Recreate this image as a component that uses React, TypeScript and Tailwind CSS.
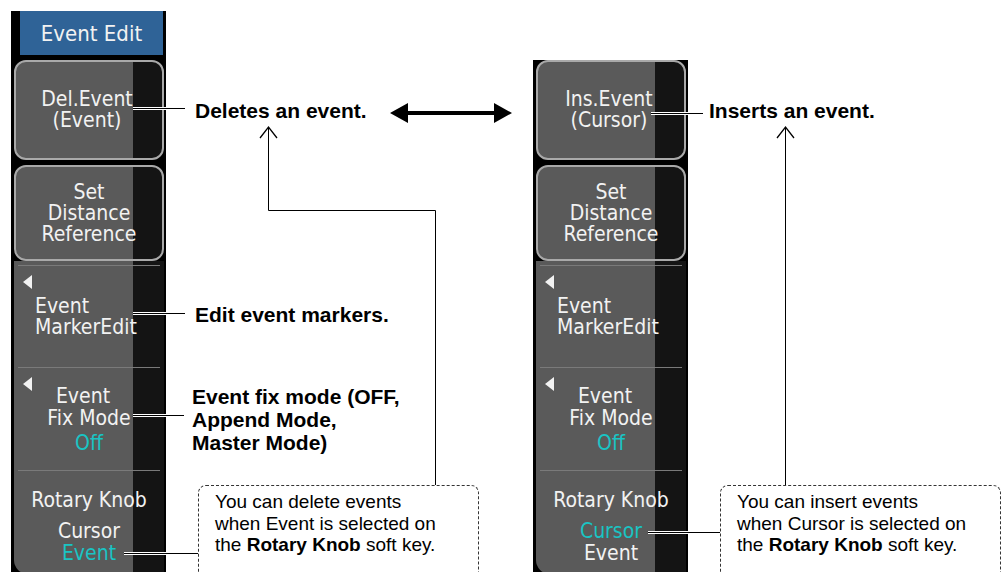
const sans = "font-['Liberation_Sans',Arial,sans-serif]";

function Arrow({ left }: { left: number }) {
  // small white pointer shown on keys that open a sub menu
  return (
    <div
      className="absolute top-[9px] h-0 w-0 border-y-[7px] border-r-[9px] border-y-transparent border-r-[#f2f2f2]"
      style={{ left }}
    />
  );
}

function SoftKeyPanel({ header, insert }: { header: boolean; insert: boolean }) {
  const cyan = "text-[#19c4c4]";
  return (
    <div
      className={`flex w-[155px] shrink-0 flex-col bg-black font-['DejaVu_Sans_Condensed','DejaVu_Sans',sans-serif] text-[#f2f2f2] ${
        header ? "ml-[11px] mt-[11px]" : "ml-[367px] mt-[60px]"
      }`}
    >
      {header && (
        <div className="mb-[5px] ml-[9px] flex h-[44px] w-[143px] items-center justify-center bg-[#2f6397] text-[22px]">
          Event Edit
        </div>
      )}

      <div className="ml-[3px] flex w-[150px] flex-col text-[21px]">
        {/* key 1 */}
        <div className="flex h-[100px] items-center justify-center rounded-[12px] border-2 border-[#a9a9a9] bg-[linear-gradient(90deg,#5a5a5a_117px,#141414_117px)] pr-[4px] text-center leading-[21px]">
          <div>
            {insert ? "Ins.Event" : "Del.Event"}
            <br />
            {insert ? "(Cursor)" : "(Event)"}
          </div>
        </div>

        {/* key 2 */}
        <div className="mt-[5px] flex h-[96px] items-center justify-center rounded-[12px] border-2 border-[#a9a9a9] bg-[linear-gradient(90deg,#5a5a5a_117px,#141414_117px)] text-center leading-[21px]">
          <div>
            Set
            <br />
            Distance
            <br />
            Reference
          </div>
        </div>

        {/* lower keys */}
        <div className="flex h-[313px] flex-col rounded-bl-[14px] bg-[linear-gradient(90deg,#5a5a5a_119px,#141414_119px)] pt-[4px]">
          <div className="mx-[4px] h-px bg-[#7a7a7a]" />
          <div className="relative h-[101px] pl-[21px] pt-[30px] leading-[21px]">
            <Arrow left={9} />
            <div>Event</div>
            <div>MarkerEdit</div>
          </div>
          <div className="mx-[4px] h-px bg-[#7a7a7a]" />
          <div className="relative h-[102px] pt-[17px] text-center leading-[22px]">
            <Arrow left={9} />
            <div className="pr-[12px]">Event</div>
            <div>Fix Mode</div>
            <div className={`mt-[3px] ${cyan}`}>Off</div>
          </div>
          <div className="mx-[4px] h-px bg-[#7a7a7a]" />
          <div className="pt-[18px] text-center leading-[22px]">
            <div>Rotary Knob</div>
            <div className={`mt-[9px] ${insert ? cyan : ""}`}>Cursor</div>
            <div className={insert ? "" : cyan}>Event</div>
          </div>
        </div>
      </div>
    </div>
  );
}

function Lead({ x1, x2, y, edge }: { x1: number; x2: number; y: number; edge: number }) {
  return (
    <g>
      <line x1={x1} x2={edge} y1={y} y2={y} stroke="#ffffff" strokeWidth={3} />
      <line x1={x1} x2={x2} y1={y} y2={y} stroke="#000000" strokeWidth={1} />
    </g>
  );
}

export default function App() {
  return (
    <div className={`relative flex h-[572px] w-[1002px] items-start overflow-hidden bg-white ${sans}`}>
      <SoftKeyPanel header insert={false} />
      <SoftKeyPanel header={false} insert />

      {/* leader lines and arrows */}
      <svg className="pointer-events-none absolute left-0 top-0" width={1002} height={572}>
        <Lead x1={133} x2={185} y={108.5} edge={166} />
        <Lead x1={133} x2={185} y={313.5} edge={166} />
        <Lead x1={133} x2={184} y={415.5} edge={166} />
        <Lead x1={124} x2={198} y={553.5} edge={166} />
        <Lead x1={651} x2={703} y={113.5} edge={688} />
        <Lead x1={648} x2={720} y={532.5} edge={688} />

        <polyline points="268.5,128 268.5,210.5 435.5,210.5 435.5,485" fill="none" stroke="#000" strokeWidth={1} />
        <polyline points="260,138 268.5,127 277,138" fill="none" stroke="#000" strokeWidth={1.3} />

        <line x1={785.5} x2={785.5} y1={128} y2={485} stroke="#000" strokeWidth={1} />
        <polyline points="777,138 785.5,127 794,138" fill="none" stroke="#000" strokeWidth={1.3} />

        <polygon
          points="390,113 408,103 408,111 494,111 494,103 512,113 494,123 494,115 408,115 408,123"
          fill="#000"
        />
      </svg>

      {/* annotations */}
      <div className="absolute left-[195px] top-[100px] text-[21px] font-bold leading-[21px] text-black">
        Deletes an event.
      </div>
      <div className="absolute left-[709px] top-[100px] text-[21px] font-bold leading-[21px] text-black">
        Inserts an event.
      </div>
      <div className="absolute left-[195px] top-[304px] text-[21px] font-bold leading-[21px] text-black">
        Edit event markers.
      </div>
      <div className="absolute left-[192px] top-[385px] text-[21px] font-bold leading-[23px] text-black">
        Event fix mode (OFF,
        <br />
        Append Mode,
        <br />
        Master Mode)
      </div>

      <div className="absolute left-[198px] top-[485px] h-[95px] w-[281px] rounded-[8px] border border-dashed border-[#333] bg-white pl-[16px] pt-[5px] text-[19px] leading-[21.5px] text-black">
        You can delete events
        <br />
        when Event is selected on
        <br />
        the <b>Rotary Knob</b> soft key.
      </div>
      <div className="absolute left-[720px] top-[485px] h-[95px] w-[281px] rounded-[8px] border border-dashed border-[#333] bg-white pl-[16px] pt-[5px] text-[19px] leading-[21.5px] text-black">
        You can insert events
        <br />
        when Cursor is selected on
        <br />
        the <b>Rotary Knob</b> soft key.
      </div>
    </div>
  );
}
